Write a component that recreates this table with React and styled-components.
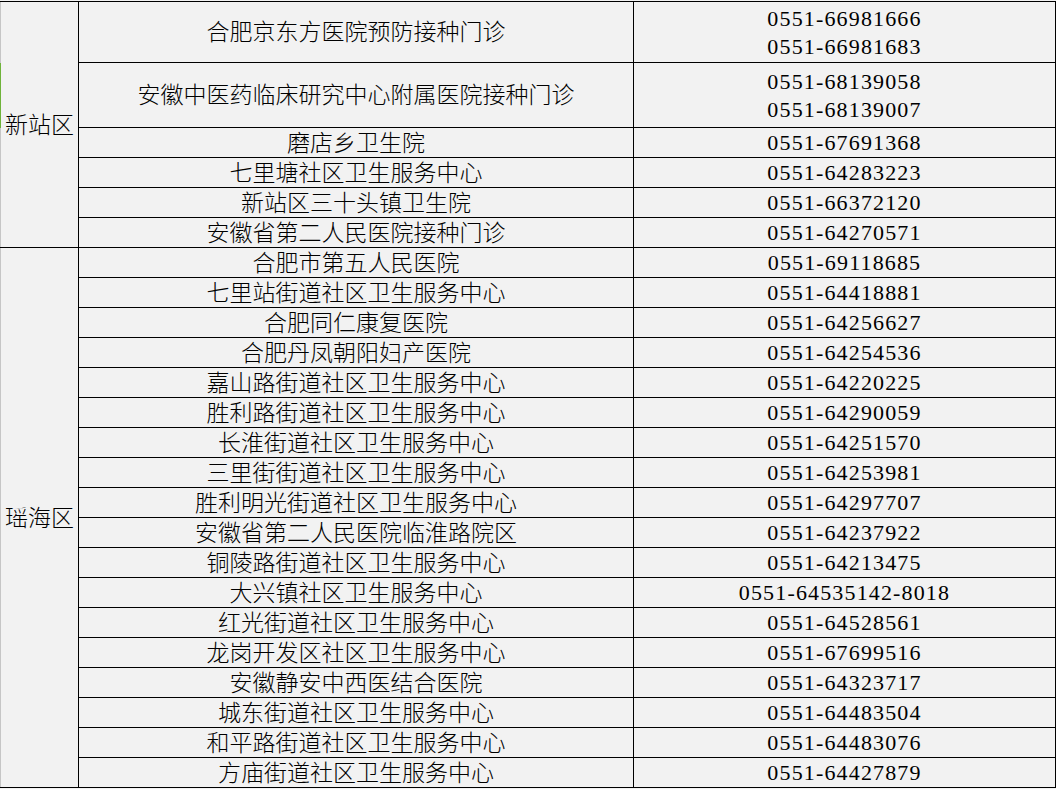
import React from "react";
import styled, { createGlobalStyle } from "styled-components";

const Global = createGlobalStyle`
  html, body { margin: 0; padding: 0; background: #f2f2f2; }
  body { padding-top: 1px; }
`;

const Sheet = styled.div`
  position: relative;
  width: 1056px;
`;

const Table = styled.table`
  border-collapse: collapse;
  table-layout: fixed;
  width: 1055px;
  background: #f2f2f2;
  color: #000;
  font-family: "Liberation Serif", "Noto Sans CJK SC", serif;
  border-left: 1px solid #c6c6c6;
`;

const Cell = styled.td`
  border: 1px solid #000;
  padding: 0 0 ${(p) => (p.$phone ? 0 : 4)}px 0;
  text-align: center;
  vertical-align: middle;
  height: ${(p) => (p.$h || 29) - (p.$phone ? 0 : 4)}px;
  font-family: ${(p) =>
    p.$phone
      ? `"Liberation Serif", "Noto Sans CJK SC", serif`
      : `"Noto Sans CJK SC", sans-serif`};
  font-size: ${(p) => (p.$phone ? 22 : 23)}px;
  font-weight: ${(p) => (p.$phone ? 400 : 300)};
  letter-spacing: ${(p) => (p.$phone ? "1.15px" : "0")};
  line-height: ${(p) => (p.$phone ? 28 : 24)}px;
  white-space: nowrap;
`;

const DistrictCell = styled(Cell)`
  border-left: 1px solid #c6c6c6;
  height: auto;
`;

const PhoneLine = styled.div`
  line-height: 28px;
  padding-top: ${(p) => (p.$first ? 1 : 0)}px;
`;

const Marker = styled.div`
  position: absolute;
  left: 0;
  top: 62px;
  width: 1px;
  height: 65px;
  background: #6fb33a;
`;

const data = [
  {
    district: "新站区",
    rows: [
      { name: "合肥京东方医院预防接种门诊", phones: ["0551-66981666", "0551-66981683"], h: 60 },
      { name: "安徽中医药临床研究中心附属医院接种门诊", phones: ["0551-68139058", "0551-68139007"], h: 64 },
      { name: "磨店乡卫生院", phones: ["0551-67691368"] },
      { name: "七里塘社区卫生服务中心", phones: ["0551-64283223"] },
      { name: "新站区三十头镇卫生院", phones: ["0551-66372120"] },
      { name: "安徽省第二人民医院接种门诊", phones: ["0551-64270571"] },
    ],
  },
  {
    district: "瑶海区",
    rows: [
      { name: "合肥市第五人民医院", phones: ["0551-69118685"] },
      { name: "七里站街道社区卫生服务中心", phones: ["0551-64418881"] },
      { name: "合肥同仁康复医院", phones: ["0551-64256627"] },
      { name: "合肥丹凤朝阳妇产医院", phones: ["0551-64254536"] },
      { name: "嘉山路街道社区卫生服务中心", phones: ["0551-64220225"] },
      { name: "胜利路街道社区卫生服务中心", phones: ["0551-64290059"] },
      { name: "长淮街道社区卫生服务中心", phones: ["0551-64251570"] },
      { name: "三里街街道社区卫生服务中心", phones: ["0551-64253981"] },
      { name: "胜利明光街道社区卫生服务中心", phones: ["0551-64297707"] },
      { name: "安徽省第二人民医院临淮路院区", phones: ["0551-64237922"] },
      { name: "铜陵路街道社区卫生服务中心", phones: ["0551-64213475"] },
      { name: "大兴镇社区卫生服务中心", phones: ["0551-64535142-8018"] },
      { name: "红光街道社区卫生服务中心", phones: ["0551-64528561"] },
      { name: "龙岗开发区社区卫生服务中心", phones: ["0551-67699516"] },
      { name: "安徽静安中西医结合医院", phones: ["0551-64323717"] },
      { name: "城东街道社区卫生服务中心", phones: ["0551-64483504"] },
      { name: "和平路街道社区卫生服务中心", phones: ["0551-64483076"] },
      { name: "方庙街道社区卫生服务中心", phones: ["0551-64427879"] },
    ],
  },
];

export default function App() {
  return (
    <>
      <Global />
      <Sheet>
        <Table>
          <colgroup>
            <col style={{ width: 78 }} />
            <col style={{ width: 555 }} />
            <col style={{ width: 422 }} />
          </colgroup>
          <tbody>
            {data.map((group) =>
              group.rows.map((r, i) => (
                <tr key={group.district + i}>
                  {i === 0 && (
                    <DistrictCell rowSpan={group.rows.length}>{group.district}</DistrictCell>
                  )}
                  <Cell $h={r.h}>{r.name}</Cell>
                  <Cell $h={r.h} $phone>
                    {r.phones.map((p, k) => (
                      <PhoneLine key={p} $first={r.phones.length > 1 && k === 0}>
                        {p}
                      </PhoneLine>
                    ))}
                  </Cell>
                </tr>
              ))
            )}
          </tbody>
        </Table>
        <Marker />
      </Sheet>
    </>
  );
}
